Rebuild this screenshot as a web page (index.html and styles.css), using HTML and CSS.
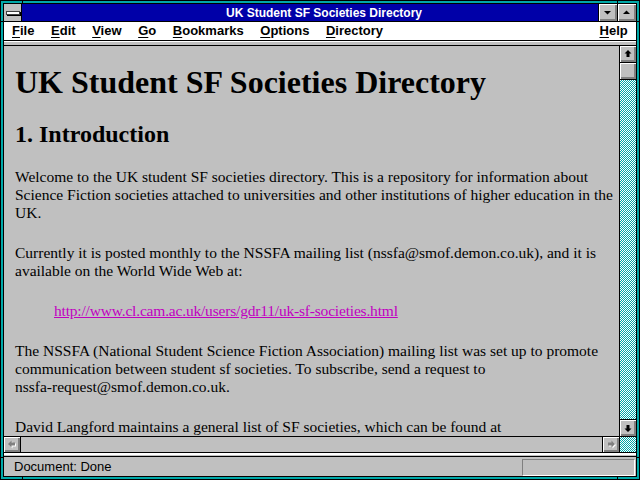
FILE: index.html
```html
<!DOCTYPE html>
<html lang="en">
<head>
<meta charset="utf-8">
<title>UK Student SF Societies Directory</title>
<link rel="stylesheet" href="styles.css">
</head>
<body>
<div class="frame">
  <span class="notch nv nt nl"></span>
  <span class="notch nv nt nr"></span>
  <span class="notch nv nb nl"></span>
  <span class="notch nv nb nr"></span>
  <span class="notch nh nhl nht"></span>
  <span class="notch nh nhr nht"></span>
  <span class="notch nh nhl nhb"></span>
  <span class="notch nh nhr nhb"></span>
  <div class="inner">
    <div class="titlebar">
      <div class="sysbox"><span class="sysbar"></span></div>
      <div class="caption">UK Student SF Societies Directory</div>
      <div class="tbtn"><svg width="18" height="17" viewBox="0 0 18 17"><polygon points="5,7 12,7 8.5,10.5" fill="#000"/></svg></div>
      <div class="tbtn"><svg width="18" height="17" viewBox="0 0 18 17"><polygon points="5,10 12,10 8.5,6.5" fill="#000"/></svg></div>
    </div>
    <div class="menubar">
      <span class="menu"><u>F</u>ile</span>
      <span class="menu"><u>E</u>dit</span>
      <span class="menu"><u>V</u>iew</span>
      <span class="menu"><u>G</u>o</span>
      <span class="menu"><u>B</u>ookmarks</span>
      <span class="menu"><u>O</u>ptions</span>
      <span class="menu"><u>D</u>irectory</span>
      <span class="menu help"><u>H</u>elp</span>
    </div>
    <div class="ridge"></div>
    <div class="main">
      <div class="page">
        <h1>UK Student SF Societies Directory</h1>
        <h2>1. Introduction</h2>
        <p>Welcome to the UK student SF societies directory. This is a repository for information about Science Fiction societies attached to universities and other institutions of higher education in the UK.</p>
        <p>Currently it is posted monthly to the NSSFA mailing list (nssfa@smof.demon.co.uk), and it is available on the World Wide Web at:</p>
        <p class="url"><a href="#">http://www.cl.cam.ac.uk/users/gdr11/uk-sf-societies.html</a></p>
        <p>The NSSFA (National Student Science Fiction Association) mailing list was set up to promote communication between student sf societies. To subscribe, send a request to <span class="nobr">nssfa-request@smof.demon.co.uk.</span></p>
        <p>David Langford maintains a general list of SF societies, which can be found at</p>
      </div>
      <div class="vscroll">
        <div class="sbtn sbtn-up"><svg width="16" height="16" viewBox="0 0 16 16"><polygon points="8,4 11.5,7.5 9.5,7.5 9.5,11 6.5,11 6.5,7.5 4.5,7.5" fill="#000"/></svg></div>
        <div class="thumb"></div>
        <div class="track"></div>
        <div class="sbtn sbtn-down"><svg width="16" height="16" viewBox="0 0 16 16"><polygon points="8,12 11.5,8.5 9.5,8.5 9.5,5 6.5,5 6.5,8.5 4.5,8.5" fill="#000"/></svg></div>
      </div>
    </div>
    <div class="hscroll">
      <div class="hbtn hbtn-left"><svg width="16" height="15" viewBox="0 0 16 15"><polygon points="5,8 8.5,4.5 8.5,6.5 12,6.5 12,9.5 8.5,9.5 8.5,11.5" fill="#fff"/><polygon points="4,7 7.5,3.5 7.5,5.5 11,5.5 11,8.5 7.5,8.5 7.5,10.5" fill="#808080"/></svg></div>
      <div class="htrack"></div>
      <div class="hbtn hbtn-right"><svg width="16" height="15" viewBox="0 0 16 15"><polygon points="13,8 9.5,4.5 9.5,6.5 6,6.5 6,9.5 9.5,9.5 9.5,11.5" fill="#fff"/><polygon points="12,7 8.5,3.5 8.5,5.5 5,5.5 5,8.5 8.5,8.5 8.5,10.5" fill="#808080"/></svg></div>
      <div class="corner"></div>
    </div>
    <div class="status-ridge"></div>
    <div class="statusbar">
      <span class="status-text">Document: Done</span>
      <span class="progress"></span>
    </div>
  </div>
</div>
</body>
</html>
```

FILE: styles.css
```css
html, body {
  margin: 0;
  padding: 0;
  background: #c0c0c0;
}

.frame {
  position: relative;
  width: 640px;
  height: 480px;
  box-sizing: border-box;
  padding: 3px;
  background: #00a8a8;
  box-shadow: inset 0 0 0 1px #000;
}

.notch {
  position: absolute;
  background: #000;
}
.nv { width: 1px; height: 4px; }
.nh { width: 4px; height: 1px; }
.nt { top: 0; }
.nb { bottom: 0; }
.nl { left: 22px; }
.nr { left: 617px; }
.nhl { left: 0; }
.nhr { right: 0; }
.nht { top: 21px; }
.nhb { top: 457px; }

.inner {
  height: 100%;
  box-sizing: border-box;
  border: 1px solid #000;
  display: flex;
  flex-direction: column;
  background: #c0c0c0;
  font-family: "Liberation Sans", Arial, sans-serif;
}

/* Title bar */
.titlebar {
  display: flex;
  height: 17px;
  border-bottom: 1px solid #000;
  flex: none;
}
.sysbox {
  width: 17px;
  border-right: 1px solid #000;
  background: #c0c0c0;
  display: flex;
  align-items: center;
  justify-content: center;
}
.sysbar {
  width: 12px;
  height: 2px;
  background: #fff;
  border: 1px solid #404040;
  box-shadow: 1px 1px 0 #000;
}
.caption {
  flex: 1;
  background: #0000a8;
  color: #fff;
  font-weight: bold;
  font-size: 12px;
  line-height: 18px;
  text-align: center;
  white-space: nowrap;
  padding-left: 28px;
}
.tbtn {
  width: 18px;
  border-left: 1px solid #000;
  background: #c0c0c0;
  box-shadow: inset 1px 1px #fff, inset -1px -1px #808080, inset -2px -2px #808080;
}
.tbtn svg { display: block; }

/* Menu bar */
.menubar {
  display: flex;
  height: 18px;
  background: #fff;
  border-bottom: 1px solid #000;
  flex: none;
}
.menu {
  padding: 0 8.3px;
  font-weight: bold;
  font-size: 13px;
  line-height: 18px;
  color: #000;
}
.menu:first-child { padding-left: 8px; }
.menu u { text-decoration-thickness: 1px; text-underline-offset: 2px; }
.help { margin-left: auto; }

.ridge {
  height: 3px;
  border-top: 1px solid #fff;
  border-bottom: 1px solid #000;
  background: #c0c0c0;
  flex: none;
}

/* Main area */
.main {
  flex: 1;
  display: flex;
  min-height: 0;
}
.page {
  flex: 1;
  overflow: hidden;
  padding: 18px 5px 0 11px;
  background: #c0c0c0;
  color: #000;
  font-family: "Liberation Serif", "Times New Roman", serif;
}
.page h1 {
  margin: 0 0 20px;
  font-size: 32px;
  line-height: 36px;
  font-weight: bold;
}
.page h2 {
  margin: 0 0 20px;
  font-size: 24px;
  line-height: 28px;
  font-weight: bold;
}
.page p {
  margin: 0 0 22px;
  font-size: 15.5px;
  line-height: 18px;
}
.page p.url { padding-left: 39px; }
.page a { color: #c000c0; text-decoration: underline; letter-spacing: -0.19px; }
.nobr { white-space: nowrap; }

.vscroll {
  width: 16px;
  border-left: 1px solid #000;
  display: flex;
  flex-direction: column;
  flex: none;
}
.sbtn, .thumb {
  height: 16px;
  background: #c0c0c0;
  box-shadow: inset 1px 1px #fff, inset -1px -1px #808080, inset -2px -2px #808080;
  flex: none;
}
.sbtn svg { display: block; }
.sbtn-up, .thumb { border-bottom: 1px solid #000; }
.sbtn-down { border-top: 1px solid #000; }
.track {
  flex: 1;
  background: repeating-conic-gradient(#00a8a8 0 25%, #ffffff 0 50%) 0 0 / 2px 2px;
}

/* Horizontal scrollbar */
.hscroll {
  display: flex;
  height: 15px;
  border-top: 1px solid #000;
  border-bottom: 1px solid #000;
  flex: none;
}
.hbtn {
  width: 16px;
  background: #c0c0c0;
  box-shadow: inset 1px 1px #fff, inset -1px -1px #808080, inset -2px -2px #808080;
}
.hbtn svg { display: block; }
.hbtn-left { border-right: 1px solid #000; }
.hbtn-right { border-left: 1px solid #000; }
.htrack { flex: 1; background: #c0c0c0; }
.corner {
  width: 16px;
  border-left: 1px solid #000;
  background: repeating-conic-gradient(#00a8a8 0 25%, #ffffff 0 50%) 0 0 / 2px 2px;
}

.status-ridge {
  height: 1px;
  border-top: 2px solid #fff;
  border-bottom: 1px solid #000;
  background: #c0c0c0;
  flex: none;
}

/* Status bar */
.statusbar {
  height: 19px;
  display: flex;
  align-items: flex-start;
  padding: 0 1px 0 10px;
  flex: none;
}
.status-text {
  flex: 1;
  font-size: 13px;
  line-height: 19px;
  color: #000;
}
.progress {
  width: 111px;
  height: 15px;
  margin-top: 2px;
  border-top: 1px solid #808080;
  border-left: 1px solid #808080;
  border-bottom: 1px solid #fff;
  border-right: 1px solid #fff;
}
```
